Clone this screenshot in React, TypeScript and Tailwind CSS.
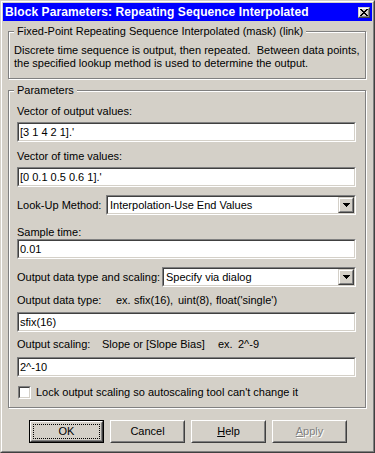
import React from 'react'

// classic 3D edges
const sunkenOuter = 'border border-t-[#808080] border-l-[#808080] border-r-white border-b-white'
const sunkenInner = 'border border-t-[#404040] border-l-[#404040] border-r-[#d4d0c8] border-b-[#d4d0c8]'
const raisedOuter = 'border border-t-[#d4d0c8] border-l-[#d4d0c8] border-r-[#404040] border-b-[#404040]'
const raisedInner = 'border border-t-white border-l-white border-r-[#808080] border-b-[#808080]'
const btnOuter = 'border border-t-white border-l-white border-r-[#404040] border-b-[#404040]'
const btnInner = 'border border-t-[#d4d0c8] border-l-[#d4d0c8] border-r-[#808080] border-b-[#808080]'

const Label = ({ children }: { children: React.ReactNode }) => (
    <div className="h-[13px] leading-[13px] whitespace-pre">{children}</div>
)

const Field = ({ value, className = '' }: { value: string; className?: string }) => (
    <div className={`h-[20px] ${sunkenOuter} ${className}`}>
        <div className={`h-full bg-white pl-[1px] leading-[16px] whitespace-pre ${sunkenInner}`}>{value}</div>
    </div>
)

const Arrow = () => (
    <svg width="7" height="4" viewBox="0 0 7 4" shapeRendering="crispEdges">
        <rect x="0" y="0" width="7" height="1" fill="#000" />
        <rect x="1" y="1" width="5" height="1" fill="#000" />
        <rect x="2" y="2" width="3" height="1" fill="#000" />
        <rect x="3" y="3" width="1" height="1" fill="#000" />
    </svg>
)

const Select = ({ value, className = '' }: { value: string; className?: string }) => (
    <div className={`h-[20px] ${sunkenOuter} ${className}`}>
        <div className={`h-full bg-white flex ${sunkenInner}`}>
            <span className="flex-1 pl-[2px] leading-[16px] whitespace-pre">{value}</span>
            <div className={`w-[16px] h-[16px] bg-[#d4d0c8] ${raisedOuter}`}>
                <div className={`h-full flex items-center justify-center ${raisedInner}`}>
                    <Arrow />
                </div>
            </div>
        </div>
    </div>
)

const Group = ({ title, className, children }: { title: string; className: string; children?: React.ReactNode }) => (
    <div className={`relative border border-[#808080] shadow-[inset_1px_1px_0_#fff,1px_1px_0_#fff] ${className}`}>
        <span className="absolute left-[5px] -top-[7px] bg-[#d4d0c8] px-[3px] leading-[13px] whitespace-pre">{title}</span>
        {children}
    </div>
)

const Button = ({ children, isDefault, disabled }: { children: React.ReactNode; isDefault?: boolean; disabled?: boolean }) => {
    const text = disabled ? 'text-[#808080] [text-shadow:1px_1px_0_#fff]' : ''
    if (isDefault) {
        return (
            <div className="w-[75px] h-[23px] border border-black">
                <div className={`h-full ${btnOuter}`}>
                    <div className={`h-full p-[1px] ${btnInner}`}>
                        <div className="h-full border border-dotted border-black flex items-center justify-center">{children}</div>
                    </div>
                </div>
            </div>
        )
    }
    return (
        <div className={`w-[75px] h-[23px] ${btnOuter}`}>
            <div className={`h-full flex items-center justify-center ${btnInner} ${text}`}>{children}</div>
        </div>
    )
}

const CloseGlyph = () => (
    <svg width="8" height="7" viewBox="0 0 8 7" shapeRendering="crispEdges">
        <path
            fill="#000"
            d="M0 0h2v1H0zM6 0h2v1H6zM1 1h2v1H1zM5 1h2v1H5zM2 2h4v1H2zM3 3h2v1H3zM2 4h4v1H2zM1 5h2v1H1zM5 5h2v1H5zM0 6h2v1H0zM6 6h2v1H6z"
        />
    </svg>
)

export default function App() {
    return (
        <div className="w-[375px] h-[453px] font-['Liberation_Sans',Arial,sans-serif] text-[11px] text-black">
            <div className={`h-full ${raisedOuter}`}>
                <div className={`h-full bg-[#d4d0c8] p-[1px] flex flex-col ${raisedInner}`}>
                    {/* title bar */}
                    <div className="h-[18px] bg-[#0000ff] flex items-center pl-[2px] pr-[2px]">
                        <span className="flex-1 text-white font-bold text-[12px] tracking-[0.1px] leading-[18px] whitespace-nowrap">
                            Block Parameters: Repeating Sequence Interpolated
                        </span>
                        <div className={`w-[12px] h-[11px] bg-[#d4d0c8] ${raisedOuter}`}>
                            <div className={`h-full flex items-center justify-center ${raisedInner}`}>
                                <CloseGlyph />
                            </div>
                        </div>
                    </div>

                    <Group title="Fixed-Point Repeating Sequence Interpolated (mask) (link)" className="mt-[10px] ml-[5px] w-[358px] h-[48px] pl-[5px] pt-[12px]">
                        <div className="leading-[13px] whitespace-pre">Discrete time sequence is output, then repeated.  Between data points,</div>
                        <div className="leading-[13px] whitespace-pre">the specified lookup method is used to determine the output.</div>
                    </Group>

                    <Group title="Parameters" className="mt-[11px] ml-[5px] w-[358px] h-[318px] pl-[8px] pr-[9px] pt-[14px] flex flex-col">
                        <Label>Vector of output values:</Label>
                        <Field className="mt-[4px]" value="[3 1 4 2 1].'" />
                        <div className="mt-[8px]">
                            <Label>Vector of time values:</Label>
                        </div>
                        <Field className="mt-[4px]" value="[0 0.1 0.5 0.6 1].'" />
                        <div className="mt-[8px] h-[20px] flex items-center">
                            <span className="flex-1 whitespace-pre">Look-Up Method:</span>
                            <Select className="w-[250px]" value="Interpolation-Use End Values" />
                        </div>
                        <div className="mt-[11px]">
                            <Label>Sample time:</Label>
                        </div>
                        <Field value="0.01" />
                        <div className="mt-[8px] h-[20px] flex items-center">
                            <span className="flex-1 whitespace-pre">Output data type and scaling:</span>
                            <Select className="w-[194px]" value="Specify via dialog" />
                        </div>
                        <div className="mt-[7px]">
                            <Label>
                                <span className="inline-block w-[99px]">Output data type:</span>
                                <span className="inline-block w-[18px]">ex.</span>
                                <span className="inline-block w-[44px]">sfix(16),</span>
                                <span className="inline-block w-[38px]">uint(8),</span>
                                <span>float('single')</span>
                            </Label>
                        </div>
                        <Field className="mt-[5px]" value="sfix(16)" />
                        <div className="mt-[6px]">
                            <Label>
                                <span className="inline-block w-[85px]">Output scaling:</span>
                                <span className="inline-block w-[116px]">Slope or [Slope Bias]</span>
                                <span className="inline-block w-[20px]">ex.</span>
                                <span>2^-9</span>
                            </Label>
                        </div>
                        <Field className="mt-[6px]" value="2^-10" />
                        <div className="mt-[9px] h-[13px] flex items-center">
                            <div className={`ml-[1px] w-[13px] h-[13px] ${sunkenOuter}`}>
                                <div className={`h-full bg-white ${sunkenInner}`} />
                            </div>
                            <span className="ml-[5px] leading-[13px] whitespace-pre">Lock output scaling so autoscaling tool can't change it</span>
                        </div>
                    </Group>

                    {/* buttons */}
                    <div className="mt-[12px] pl-[26px] flex gap-[6px]">
                        <Button isDefault>OK</Button>
                        <Button>Cancel</Button>
                        <Button>
                            <u className="underline-offset-[1px]">H</u>elp
                        </Button>
                        <Button disabled>
                            <u className="underline-offset-[1px]">A</u>pply
                        </Button>
                    </div>
                </div>
            </div>
        </div>
    )
}
